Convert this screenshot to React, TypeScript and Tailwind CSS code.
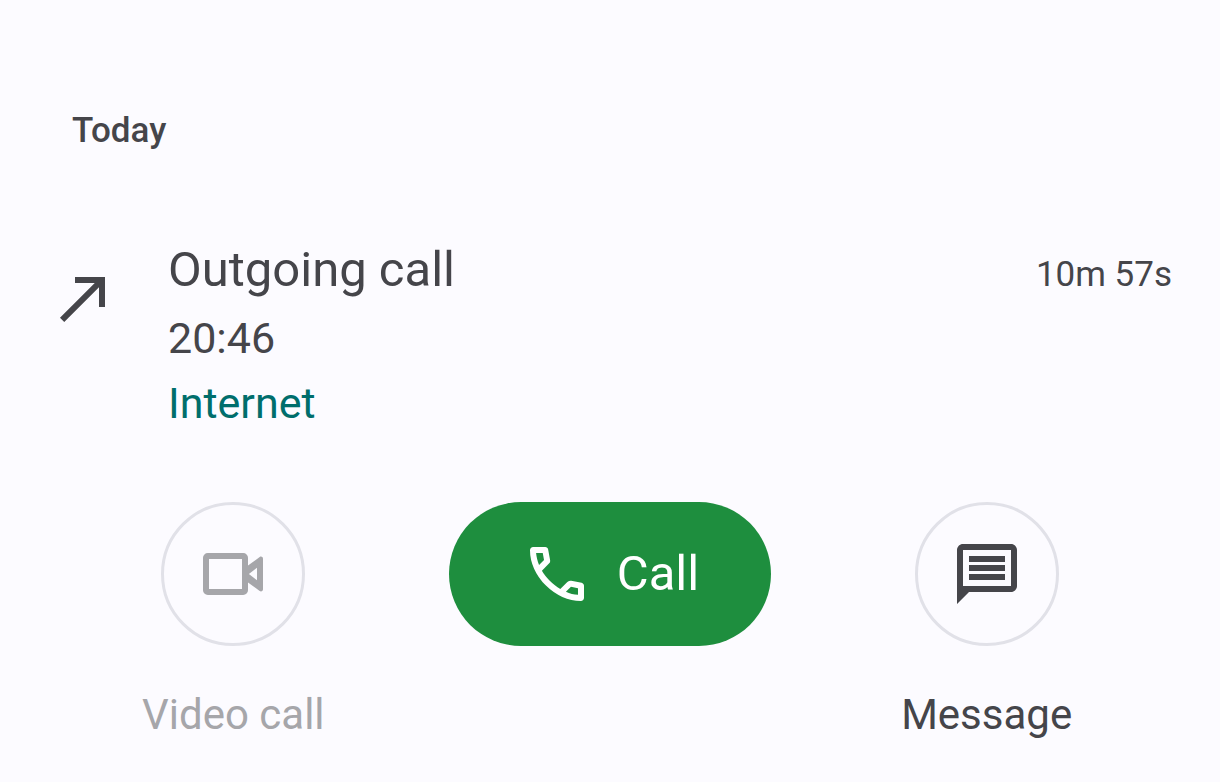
import type { ReactNode } from "react";

function CallMadeIcon() {
  return (
    <svg className="size-[72px] shrink-0" viewBox="0 0 24 24" fill="currentColor" aria-hidden="true">
      <path d="M9 5v2h6.59L4 18.59 5.41 20 17 8.41V15h2V5z" />
    </svg>
  );
}

function VideoIcon() {
  return (
    <svg className="size-[72px]" viewBox="0 0 24 24" fill="currentColor" aria-hidden="true">
      <path
        fillRule="evenodd"
        d="M3.6 5h11.8A1.6 1.6 0 0 1 17 6.6v2.6l3.9-2.9c.5-.35 1.1 0 1.1.6v10.2c0 .6-.6.95-1.1.6L17 14.8v2.6a1.6 1.6 0 0 1-1.6 1.6H3.6A1.6 1.6 0 0 1 2 17.4V6.6A1.6 1.6 0 0 1 3.6 5zM4 7v10h11V7zm13.3 5 2.7 2.1V9.9z"
      />
    </svg>
  );
}

function PhoneIcon() {
  return (
    <svg className="size-[72px]" viewBox="0 0 24 24" fill="currentColor" aria-hidden="true">
      <path d="M19.95 21q-3.125 0-6.175-1.362t-5.55-3.863-3.862-5.55T3 4.05q0-.45.3-.75t.75-.3H8.1q.35 0 .625.238t.325.562l.65 3.5q.05.4-.025.675T9.4 8.45L6.975 10.9q.5.925 1.187 1.787t1.513 1.663q.775.775 1.625 1.438T13.1 17l2.35-2.35q.225-.225.588-.337t.712-.063l3.45.7q.35.1.575.363T21 15.9v4.05q0 .45-.3.75t-.75.3M6.025 9l1.65-1.65L7.25 5H5.025q.125 1.025.35 2.025T6.025 9m8.95 8.95q.975.425 1.988.675T19 18.95v-2.2l-2.35-.475z" />
    </svg>
  );
}

function MessageIcon() {
  return (
    <svg className="size-[72px]" viewBox="0 0 24 24" fill="currentColor" aria-hidden="true">
      <path d="M4 4h16v12H4V4m0-2c-1.1 0-2 .9-2 2v18l4-4h14c1.1 0 2-.9 2-2V4c0-1.1-.9-2-2-2H4zm2 10h12v2H6v-2zm0-3h12v2H6V9zm0-3h12v2H6V6z" />
    </svg>
  );
}

function RoundAction({ label, disabled, children }: { label: string; disabled?: boolean; children: ReactNode }) {
  return (
    <button
      type="button"
      disabled={disabled}
      className="flex flex-col items-center gap-10 text-[#45454a] disabled:text-[#a6a6aa]"
    >
      <span className="flex size-36 items-center justify-center rounded-full border-3 border-[#e1e1e8]">
        {children}
      </span>
      <span className="text-[42px] leading-[58px]">{label}</span>
    </button>
  );
}

export default function App() {
  return (
    <main className="min-h-screen bg-[#fcfbff] pt-[106px] font-['Roboto','Noto_Sans',sans-serif] text-[#45454a]">
      <h2 className="px-[72px] text-[35px] leading-[50px] font-medium">Today</h2>

      {/* Call entry */}
      <section className="mt-[78px] flex items-start px-12">
        <div className="pt-7">
          <CallMadeIcon />
        </div>
        <div className="ml-12 flex-1">
          <h3 className="text-[49px] leading-[72px]">Outgoing call</h3>
          <p className="text-[43px] leading-16">20:46</p>
          <p className="text-[43px] leading-[66px] text-[#006e6c]">Internet</p>
        </div>
        <p className="pt-4 text-[35px] leading-[50px]">10m 57s</p>
      </section>

      {/* Actions */}
      <section className="mt-[66px] grid grid-cols-3 items-start justify-items-center px-[45px]">
        <RoundAction label="Video call" disabled>
          <VideoIcon />
        </RoundAction>
        <button
          type="button"
          className="flex h-36 items-center gap-6 rounded-full bg-[#1e8e3e] px-[72px] text-[49px] text-white"
        >
          <PhoneIcon />
          Call
        </button>
        <RoundAction label="Message">
          <MessageIcon />
        </RoundAction>
      </section>
    </main>
  );
}
